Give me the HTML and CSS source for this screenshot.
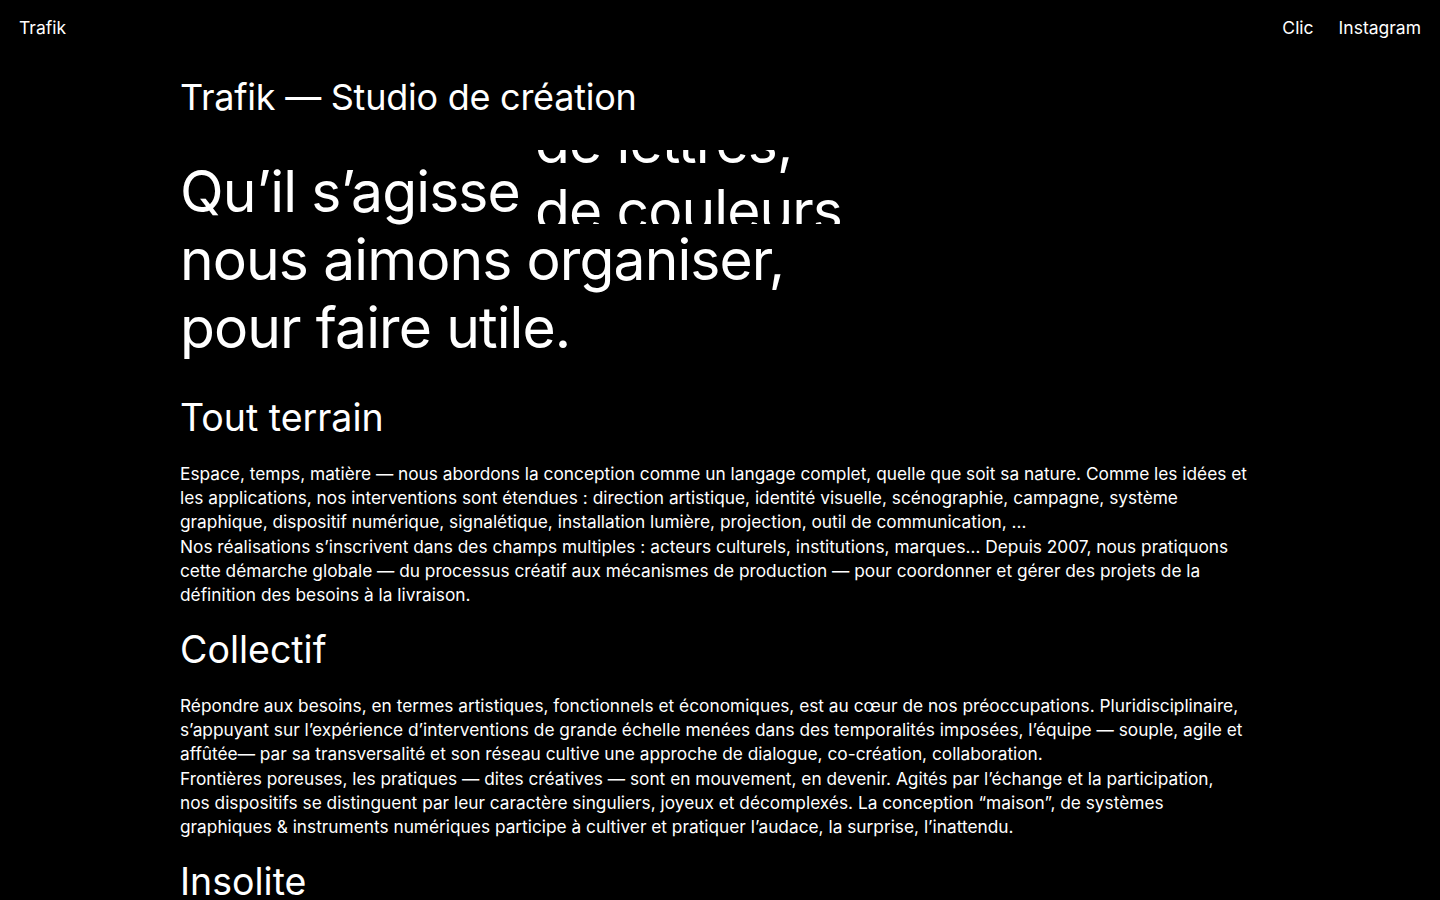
FILE: index.html
```html
<!DOCTYPE html>
<html lang="fr">
<head>
<meta charset="utf-8">
<title>Trafik — Studio de création</title>
<link rel="stylesheet" href="styles.css">
</head>
<body>
<header class="site-header">
  <a class="brand" href="#">Trafik</a>
  <nav class="nav">
    <a href="#">Clic</a>
    <a href="#">Instagram</a>
  </nav>
</header>
<main class="content">
  <h1 class="title">Trafik — Studio de création</h1>
  <p class="intro">Qu’il s’agisse <span class="roller"><span class="roller-track"><span class="roller-word">de lettres,</span><span class="roller-word">de couleurs,</span><span class="roller-word">d’espaces,</span></span></span><br>nous aimons organiser,<br>pour faire utile.</p>

  <section class="block">
    <h2 class="block-title">Tout terrain</h2>
    <p class="text">Espace, temps, matière — nous abordons la conception comme un langage complet, quelle que soit sa nature. Comme les idées et les applications, nos interventions sont étendues : direction artistique, identité visuelle, scénographie, campagne, système graphique, dispositif numérique, signalétique, installation lumière, projection, outil de communication, …</p>
    <p class="text">Nos réalisations s’inscrivent dans des champs multiples : acteurs culturels, institutions, marques… Depuis 2007, nous pratiquons cette démarche globale — du processus créatif aux mécanismes de production — pour coordonner et gérer des projets de la définition des besoins à la livraison.</p>
  </section>

  <section class="block">
    <h2 class="block-title">Collectif</h2>
    <p class="text">Répondre aux besoins, en termes artistiques, fonctionnels et économiques, est au cœur de nos préoccupations. Pluridisciplinaire, s’appuyant sur l’expérience d’interventions de grande échelle menées dans des temporalités imposées, l’équipe — souple, agile et affûtée— par sa transversalité et son réseau cultive une approche de dialogue, co-création, collaboration.</p>
    <p class="text">Frontières poreuses, les pratiques — dites créatives — sont en mouvement, en devenir. Agités par l’échange et la participation, nos&nbsp;dispositifs se distinguent par leur caractère singuliers, joyeux et décomplexés. La conception “maison”, de systèmes graphiques &amp; instruments numériques participe à cultiver et pratiquer l’audace, la surprise, l’inattendu.</p>
  </section>

  <section class="block">
    <h2 class="block-title">Insolite</h2>
    <p class="text">Curieux et attentifs, nous cherchons l’inattendu dans chaque projet.</p>
  </section>
</main>
</body>
</html>
```

FILE: styles.css
```css
html, body {
  margin: 0;
  padding: 0;
  background: #000;
  color: #fff;
}
body {
  font-family: Inter, "Noto Sans", sans-serif;
  -webkit-font-smoothing: antialiased;
}
a {
  color: inherit;
  text-decoration: none;
}
.site-header {
  display: flex;
  justify-content: space-between;
  align-items: center;
  padding: 17px 19px 0 19px;
  font-size: 17.5px;
  line-height: 22px;
}
.nav {
  display: flex;
  gap: 25px;
}
.content {
  padding: 0 180px;
}
.title {
  margin: 34px 0 0;
  font-size: 36px;
  line-height: 48px;
  font-weight: 400;
  letter-spacing: -0.25px;
}
.intro {
  margin: 37px 0 32px;
  font-size: 57px;
  line-height: 68px;
  font-weight: 400;
  letter-spacing: -0.9px;
}
.roller {
  display: inline-block;
  height: 74px;
  margin-top: -8px;
  overflow: hidden;
  vertical-align: -12px;
}
.roller-track {
  display: flex;
  flex-direction: column;
  transform: translateY(-41px);
}
.roller-word {
  display: block;
  line-height: 68px;
  white-space: nowrap;
}
.block {
  margin-bottom: 19px;
}
.block-title {
  margin: 0 0 20px;
  font-size: 37.5px;
  line-height: 48px;
  font-weight: 400;
}
.text {
  margin: 0;
  font-size: 17.3px;
  line-height: 24px;
}
.text + .text {
  margin-top: 1px;
}
```
